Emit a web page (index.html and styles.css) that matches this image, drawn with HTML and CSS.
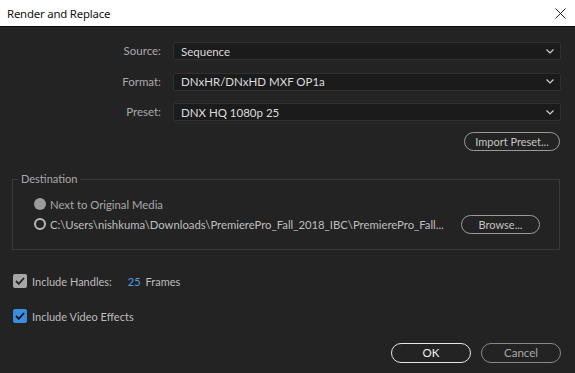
FILE: index.html
```html
<!DOCTYPE html>
<html>
<head>
<meta charset="utf-8">
<link rel="stylesheet" href="styles.css">
</head>
<body>
<div class="window">
  <div class="titlebar">
    <span class="title">Render and Replace</span>
    <svg class="close" width="11" height="11" viewBox="0 0 11 11"><path d="M0.5 0.5 L10.5 10.5 M10.5 0.5 L0.5 10.5" stroke="#222" stroke-width="1" fill="none"/></svg>
  </div>
  <div class="content">
    <div class="form">
      <label class="lbl">Source:</label>
      <div class="select"><span>Sequence</span><svg class="chev" width="8" height="5" viewBox="0 0 8 5"><path d="M0.5 0.5 L4 4 L7.5 0.5" stroke="#cfcfcf" stroke-width="1.2" fill="none"/></svg></div>
      <label class="lbl">Format:</label>
      <div class="select"><span>DNxHR/DNxHD MXF OP1a</span><svg class="chev" width="8" height="5" viewBox="0 0 8 5"><path d="M0.5 0.5 L4 4 L7.5 0.5" stroke="#cfcfcf" stroke-width="1.2" fill="none"/></svg></div>
      <label class="lbl">Preset:</label>
      <div class="select"><span>DNX HQ 1080p 25</span><svg class="chev" width="8" height="5" viewBox="0 0 8 5"><path d="M0.5 0.5 L4 4 L7.5 0.5" stroke="#cfcfcf" stroke-width="1.2" fill="none"/></svg></div>
    </div>
    <div class="import-row">
      <button class="pill import">Import Preset...</button>
    </div>
    <fieldset class="dest">
      <legend>Destination</legend>
      <div class="radio-row">
        <span class="radio filled"></span>
        <span class="dim">Next to Original Media</span>
      </div>
      <div class="radio-row">
        <span class="radio ring"></span>
        <span class="path">C:\Users\nishkuma\Downloads\PremierePro_Fall_2018_IBC\PremierePro_Fall...</span>
        <button class="pill browse">Browse...</button>
      </div>
    </fieldset>
    <div class="check-row first">
      <span class="check grey"><svg width="10" height="8" viewBox="0 0 10 8"><path d="M1 4 L3.8 6.8 L9 1" stroke="#222" stroke-width="1.8" fill="none"/></svg></span>
      <span class="ctext">Include Handles:</span>
      <span class="num">25</span>
      <span class="ctext">Frames</span>
    </div>
    <div class="check-row second">
      <span class="check blue"><svg width="10" height="8" viewBox="0 0 10 8"><path d="M1 4 L3.8 6.8 L9 1" stroke="#111" stroke-width="1.8" fill="none"/></svg></span>
      <span class="ctext">Include Video Effects</span>
    </div>
    <div class="actions">
      <button class="pill ok">OK</button>
      <button class="pill cancel">Cancel</button>
    </div>
  </div>
</div>
</body>
</html>
```
FILE: styles.css
```css
* { box-sizing: border-box; }
html, body { margin: 0; padding: 0; }
body {
  width: 575px;
  height: 373px;
  overflow: hidden;
  font-family: Lato, "Liberation Sans", sans-serif;
  font-size: 11px;
  background: #232323;
}
.window {
  width: 575px;
  height: 373px;
  display: flex;
  flex-direction: column;
  background: #232323;
}
.titlebar {
  height: 27px;
  flex: none;
  background: #ffffff;
  border-bottom: 1px solid #0a0a0a;
  display: flex;
  align-items: center;
  justify-content: space-between;
  padding: 0 9px 0 7px;
}
.title {
  font-family: "Noto Sans", "Open Sans", sans-serif;
  font-size: 11.4px;
  color: #111;
  letter-spacing: -0.2px;
}
.close { display: block; }
.content {
  flex: 1;
  display: flex;
  flex-direction: column;
  padding-top: 15px;
}
.form {
  display: grid;
  grid-template-columns: 161px 1fr;
  column-gap: 12px;
  row-gap: 12.5px;
  padding-right: 14px;
}
.lbl {
  text-align: right;
  color: #a9a9a9;
  line-height: 18px;
  height: 18px;
  font-size: 11.5px;
}
.select {
  height: 18px;
  background: #1b1b1b;
  border: 1px solid #303030;
  border-radius: 2px;
  display: flex;
  align-items: center;
  justify-content: space-between;
  padding: 0 6px 0 7px;
  color: #dcdcdc;
  font-size: 11.5px;
}
.chev { display: block; }
.pill {
  font-family: Lato, "Liberation Sans", sans-serif;
  font-size: 11px;
  background: transparent;
  border: 1px solid #9a9a9a;
  border-radius: 10px;
  color: #c4c4c4;
  height: 19px;
  padding: 0;
  line-height: 17px;
}
.import-row {
  display: flex;
  justify-content: flex-end;
  padding-right: 15px;
  margin-top: 11px;
}
.import { width: 96px; }
.dest {
  margin: 21px 15px 0 12px;
  padding: 0 19px 15px 5px;
  border: 1px solid #393939;
  min-width: 0;
}
.dest legend {
  padding: 0 3px;
  color: #a9a9a9;
  line-height: 14px;
}
.radio-row {
  display: flex;
  align-items: center;
  height: 20px;
  margin-left: 16px;
  color: #bdbdbd;
  font-size: 11.3px;
}
.radio-row:first-of-type { margin-top: 8px; }
.radio {
  width: 12px;
  height: 12px;
  border-radius: 50%;
  margin-right: 4px;
  flex: none;
}
.radio.filled { background: #9b9b9b; }
.radio.ring { border: 2px solid #b8b8b8; }
.dim { color: #a8a8a8; }
.path { flex: none; margin-right: auto; color: #bfbfbf; white-space: nowrap; }
.browse { width: 79px; flex: none; }
.check-row {
  display: flex;
  align-items: center;
  height: 20px;
  padding-left: 13px;
  color: #bdbdbd;
}
.check-row.first { margin-top: 21px; }
.check-row.second { margin-top: 15px; }
.check {
  width: 14px;
  height: 14px;
  border-radius: 2px;
  display: flex;
  align-items: center;
  justify-content: center;
  margin-right: 5px;
  flex: none;
}
.check.grey { background: #a6a6a6; }
.check.blue { background: #3b8de0; }
.num { color: #4c9cea; margin: 0 5px 0 16px; }
.actions {
  display: flex;
  justify-content: flex-end;
  gap: 10px;
  padding-right: 14px;
  margin-top: 17px;
}
.ok { width: 80px; height: 20px; border-color: #e6e6e6; color: #f2f2f2; line-height: 18px; font-size: 11.5px; }
.cancel { width: 80px; height: 20px; border-color: #8a8a8a; color: #a8a8a8; line-height: 18px; font-size: 11.5px; }
```
